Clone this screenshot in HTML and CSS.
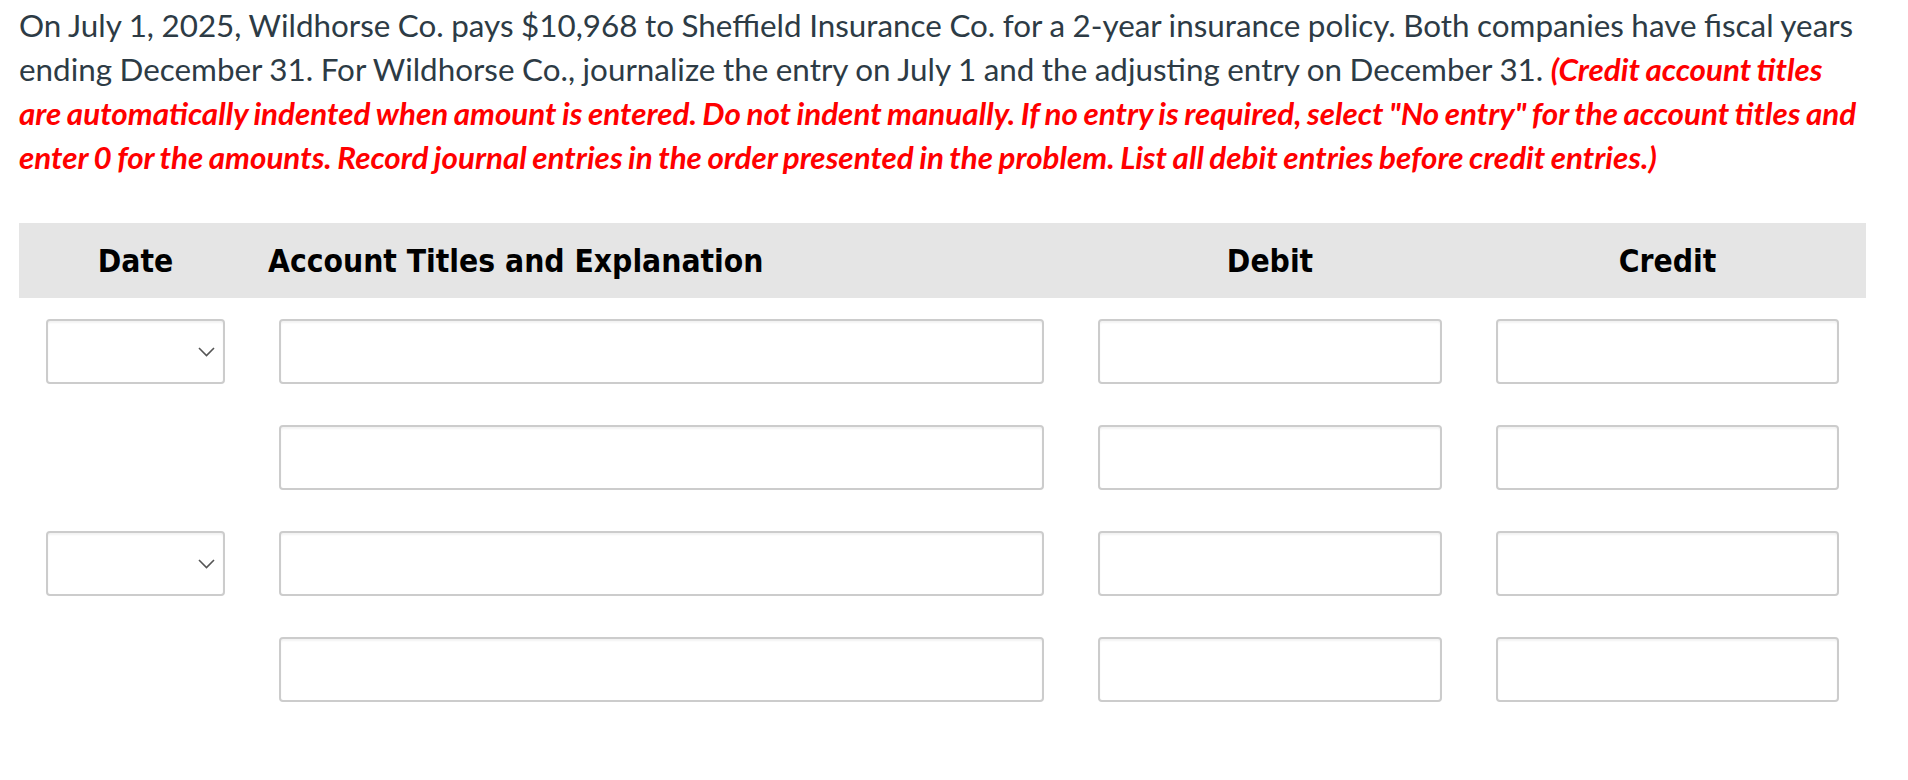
FILE: index.html
```html
<!DOCTYPE html>
<html lang="en">
<head>
<meta charset="utf-8">
<title>Journal entry</title>
<link rel="stylesheet" href="styles.css">
</head>
<body>
<div class="page">
  <p class="question">On July 1, 2025, Wildhorse Co. pays $10,968 to Sheffield Insurance Co. for a 2-year insurance policy. Both companies have fiscal years ending December 31. For Wildhorse Co., journalize the entry on July 1 and the adjusting entry on December 31. <em class="note">(Credit account titles are automatically indented when amount is entered. Do not indent manually. If no entry is required, select "No entry" for the account titles and enter 0 for the amounts. Record journal entries in the order presented in the problem. List all debit entries before credit entries.)</em></p>

  <div class="journal">
    <div class="head">
      <div class="hcell center">Date</div>
      <div class="hcell account">Account Titles and Explanation</div>
      <div class="hcell center">Debit</div>
      <div class="hcell center">Credit</div>
    </div>

    <div class="row">
      <div class="cell"><div class="select"><svg class="chev" width="17" height="10" viewBox="0 0 17 10"><path d="M1 1 L8.5 8.5 L16 1" fill="none" stroke="#555" stroke-width="1.6"/></svg></div></div>
      <div class="cell"><input class="field" type="text"></div>
      <div class="cell"><input class="field" type="text"></div>
      <div class="cell"><input class="field" type="text"></div>
    </div>

    <div class="row">
      <div class="cell"></div>
      <div class="cell"><input class="field" type="text"></div>
      <div class="cell"><input class="field" type="text"></div>
      <div class="cell"><input class="field" type="text"></div>
    </div>

    <div class="row">
      <div class="cell"><div class="select"><svg class="chev" width="17" height="10" viewBox="0 0 17 10"><path d="M1 1 L8.5 8.5 L16 1" fill="none" stroke="#555" stroke-width="1.6"/></svg></div></div>
      <div class="cell"><input class="field" type="text"></div>
      <div class="cell"><input class="field" type="text"></div>
      <div class="cell"><input class="field" type="text"></div>
    </div>

    <div class="row">
      <div class="cell"></div>
      <div class="cell"><input class="field" type="text"></div>
      <div class="cell"><input class="field" type="text"></div>
      <div class="cell"><input class="field" type="text"></div>
    </div>
  </div>
</div>
</body>
</html>
```

FILE: styles.css
```css
html, body {
  margin: 0;
  padding: 0;
  background: #ffffff;
}

.page {
  padding: 3px 38px 0 19px;
}

.question {
  margin: 0;
  font-family: Lato, "Open Sans", sans-serif;
  font-size: 31.4px;
  line-height: 44px;
  word-spacing: -0.5px;
  color: #2d3b45;
}

.note {
  font-style: italic;
  font-weight: 700;
  word-spacing: -1.4px;
  color: #ff0000;
}

.journal {
  margin-top: 44px;
  width: 1847px;
}

.head,
.row {
  display: grid;
  grid-template-columns: 233px 819px 398px 397px;
}

.head {
  height: 75px;
  background: #e5e5e5;
  align-items: center;
  font-family: "DejaVu Sans Condensed", "DejaVu Sans", sans-serif;
  font-stretch: condensed;
  font-weight: 700;
  font-size: 31.5px;
  color: #000000;
}

.hcell.center {
  text-align: center;
}

.hcell.account {
  padding-left: 16px;
}

.row {
  margin-top: 21px;
}

.row + .row {
  margin-top: 41px;
}

.cell {
  padding: 0 27px;
  height: 65px;
}

.field,
.select {
  display: block;
  width: 100%;
  height: 65px;
  box-sizing: border-box;
  border: 2px solid #cccccc;
  border-radius: 4px;
  background: #ffffff;
  box-shadow: inset 0 2px 2px rgba(0, 0, 0, 0.05);
  margin: 0;
  padding: 0 10px;
  font-family: Lato, sans-serif;
  font-size: 20px;
  outline: none;
}

.select {
  display: flex;
  align-items: center;
  justify-content: flex-end;
  padding-right: 8px;
}
```
